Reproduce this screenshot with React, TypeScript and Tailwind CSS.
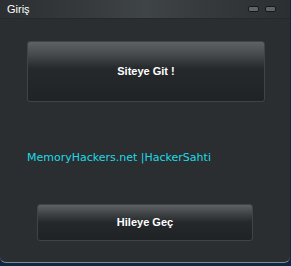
export default function App() {
  return (
    <div className="w-[291px] h-[266px] bg-[#0c2741] overflow-hidden" style={{ fontFamily: '"Liberation Sans", Arial, sans-serif' }}>
      <div className="w-[290px] h-[263px] bg-[#2a2e31] rounded-b-[6px] border-b border-[#7f8b90] flex flex-col">
        {/* Title bar */}
        <div className="h-[19px] flex items-center justify-between pl-[7px] pr-[14px] bg-[linear-gradient(to_right,#2b2f32_0%,#363a3d_30%,#3f4447_50%,#363a3d_70%,#2b2f32_100%)] border-b border-[#25292c]">
          <span className="text-white text-[11px] leading-none">Giriş</span>
          <div className="flex gap-[6px] items-center">
            <div className="w-[11px] h-[6px] rounded-[2px] bg-[#606568] border border-[#16191b]" />
            <div className="w-[11px] h-[6px] rounded-[2px] bg-[#606568] border border-[#16191b]" />
          </div>
        </div>

        {/* Body */}
        <div className="flex flex-col pt-[22px]">
          <div className="pl-[27px]">
            <button className="w-[238px] h-[61px] rounded-[3px] border border-[#3f4447] bg-[linear-gradient(to_bottom,#5e6265_0%,#45494c_22%,#25292c_45%,#1f2326_100%)] text-white text-[11px] font-bold">
              Siteye Git !
            </button>
          </div>

          <div className="pl-[27px] mt-[48px] text-[#1fdae6] text-[11px] leading-[16px]" style={{ fontFamily: '"DejaVu Sans", Verdana, sans-serif' }}>
            MemoryHackers.net |HackerSahti
          </div>

          <div className="pl-[37px] mt-[38px]">
            <button className="w-[216px] h-[37px] rounded-[3px] border border-[#3f4447] bg-[linear-gradient(to_bottom,#5e6265_0%,#3f4346_25%,#24282b_50%,#1f2326_100%)] text-white text-[11px] font-bold">
              Hileye Geç
            </button>
          </div>
        </div>
      </div>
    </div>
  );
}
